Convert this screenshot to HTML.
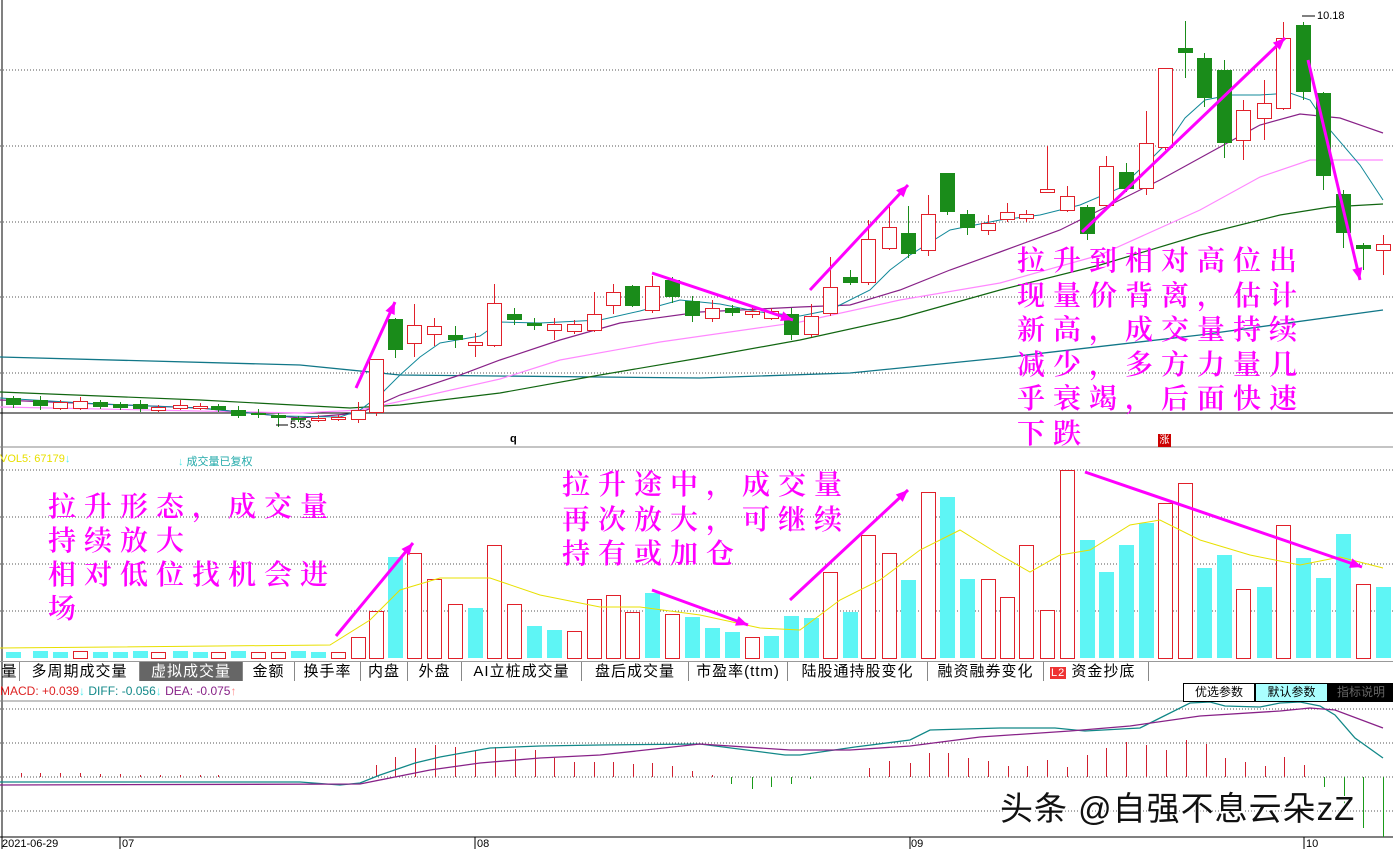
<!DOCTYPE html>
<html><head><meta charset="utf-8"><style>
body{margin:0;width:1393px;height:849px;overflow:hidden;background:#fff;position:relative;font-family:"Liberation Sans","Noto Sans CJK SC",sans-serif}
svg{position:absolute;left:0;top:0}
.ann{position:absolute;color:#f0f;font-family:"Noto Serif CJK SC","Liberation Serif",serif;font-size:28px;font-weight:600;letter-spacing:8px;line-height:34.5px;white-space:nowrap}
.tabs{position:absolute;left:0;top:661px;height:19px;width:1393px;border-top:1px solid #999;font-size:15px}
.tab{position:absolute;top:0;height:19px;line-height:19px;border-right:1px solid #888;text-align:center;color:#000;letter-spacing:1px}
.btn{position:absolute;top:683px;height:17px;line-height:17px;font-size:12px;text-align:center;border:1px solid #000}
.sm{position:absolute;font-size:11px}
</style></head><body>
<svg id="s" width="1393" height="849" shape-rendering="crispEdges"></svg>
<div class="sm" style="left:0;top:453px;color:#e8e000">VOL5: 67179<span style="color:#5ee">↓</span></div>
<div class="sm" style="left:178px;top:453px;color:#2aa"><span style="color:#5ee">↓</span> 成交量已复权</div>
<div class="sm" style="left:1317px;top:10px;color:#000">10.18</div>
<div class="sm" style="left:290px;top:419px;color:#000">5.53</div>
<div class="sm" style="left:510px;top:433px;color:#000;font-weight:bold">q</div>
<div class="sm" style="left:1158px;top:434px;width:13px;height:13px;background:#c00;color:#fff;font-size:10px;text-align:center;line-height:13px">涨</div>
<div class="sm" style="left:0;top:684px;font-size:12px;color:#d22">MACD: +0.039<span style="color:#5ee">↓</span> <span style="color:#188">DIFF: -0.056</span><span style="color:#5ee">↓</span> <span style="color:#828">DEA: -0.075</span><span style="color:#f88">↑</span></div>
<div class="tabs">
<div class="tab" style="left:0;width:19px">量</div>
<div class="tab" style="left:20px;width:119px">多周期成交量</div>
<div class="tab" style="left:140px;width:102px;background:#666;color:#fff">虚拟成交量</div>
<div class="tab" style="left:243px;width:51px">金额</div>
<div class="tab" style="left:295px;width:65px">换手率</div>
<div class="tab" style="left:361px;width:46px">内盘</div>
<div class="tab" style="left:408px;width:53px">外盘</div>
<div class="tab" style="left:462px;width:119px">AI立桩成交量</div>
<div class="tab" style="left:582px;width:106px">盘后成交量</div>
<div class="tab" style="left:689px;width:98px">市盈率(ttm)</div>
<div class="tab" style="left:788px;width:139px">陆股通持股变化</div>
<div class="tab" style="left:928px;width:115px">融资融券变化</div>
<div class="tab" style="left:1044px;width:105px;text-align:left;padding-left:6px;box-sizing:border-box"><span style="background:#e33;color:#fff;font-size:11px;padding:0 1px">L2</span> 资金抄底</div>
</div>
<div class="btn" style="left:1183px;width:70px;background:#fff">优选参数</div>
<div class="btn" style="left:1255px;width:71px;background:#aff">默认参数</div>
<div class="btn" style="left:1327px;width:66px;background:#000;color:#666">指标说明</div>
<div class="sm" style="left:2px;top:838px;font-size:11px">2021-06-29</div>
<div class="sm" style="left:122px;top:838px">07</div>
<div class="sm" style="left:477px;top:838px">08</div>
<div class="sm" style="left:911px;top:838px">09</div>
<div class="sm" style="left:1306px;top:838px">10</div>
<div class="ann" style="left:1017px;top:242px">拉升到相对高位出<br>现量价背离，估计<br>新高，成交量持续<br>减少，多方力量几<br>乎衰竭，后面快速<br>下跌</div>
<div class="ann" style="left:48px;top:488px;line-height:34px">拉升形态，成交量<br>持续放大<br>相对低位找机会进<br>场</div>
<div class="ann" style="left:562px;top:466px">拉升途中，成交量<br>再次放大，可继续<br>持有或加仓</div>
<div style="position:absolute;left:1000px;top:782px;font-size:33px;color:#111;text-shadow:2px 2px 0 #fff,-1px -1px 0 #fff;letter-spacing:1px">头条 @自强不息云朵zZ</div>
<script>
const s=document.getElementById('s');let h='';
const L=(x1,y1,x2,y2,c,w,d)=>h+=`<line x1="${x1}" y1="${y1}" x2="${x2}" y2="${y2}" stroke="${c}" stroke-width="${w||1}" ${d?'stroke-dasharray="1 2"':''}/>`;
const P=(pts,c,w)=>h+=`<polyline fill="none" shape-rendering="auto" stroke="${c}" stroke-width="${w||1}" points="${pts.map(p=>p.join(',')).join(' ')}"/>`;
[70,146,222,297,373,470,517,564,611,709,743,777,811].forEach(y=>L(0,y,1393,y,'#555',1,1));
L(0,413,1393,413,'#000',1);L(2,0,2,837,'#000',1);L(0,447,1393,447,'#888');L(0,701,1393,701,'#888');L(0,837,1393,837,'#000');
[2,120,475,910,1304].forEach(x=>L(x,837,x,849,'#000'));
P([[0,357],[300,365],[400,375],[700,378],[850,373],[1000,358],[1200,335],[1383,310]],'#178',1.3);
P([[0,392],[200,400],[350,408],[400,405],[500,393],[600,375],[700,358],[800,340],[900,318],[1000,290],[1100,265],[1200,235],[1280,215],[1330,207],[1383,204]],'#161',1.2);
P([[0,407],[300,413],[360,410],[420,397],[500,379],[560,360],[660,342],[800,322],[900,300],[1000,283],[1100,255],[1200,210],[1260,177],[1310,160],[1383,160]],'#f8f',1.2);
P([[0,400],[200,408],[300,418],[360,413],[400,395],[460,375],[500,360],[560,340],[620,323],[700,312],[800,307],[850,305],[900,290],[950,270],[1000,252],[1060,230],[1100,210],[1160,180],[1200,158],[1260,125],[1300,114],[1340,118],[1383,133]],'#828',1.2);
P([[0,398],[100,404],[200,408],[280,416],[340,417],[360,410],[380,395],[400,375],[420,357],[440,343],[480,336],[500,322],[540,323],[600,320],[640,311],[680,300],[720,304],[760,312],[800,316],[830,310],[870,290],[890,270],[910,255],[950,230],[1000,220],[1040,215],[1080,205],[1120,188],[1150,160],[1170,140],[1185,118],[1205,100],[1230,95],[1260,95],[1290,93],[1310,100],[1330,130],[1360,165],[1383,200]],'#189',1);
const C=[[13,'g',398,405,396,408],[40,'g',400,406,396,410],[60,'r',402,408,400,410],[80,'r',401,408,397,410],[100,'g',402,407,400,409],[120,'g',404,408,402,410],[140,'g',404,409,400,412],[158,'r',407,410,405,412],[180,'r',405,408,400,410],[200,'r',406,408,403,410],[218,'g',406,410,404,412],[238,'g',410,416,406,418],[258,'g',413,415,409,418],[278,'g',415,418,413,427],[298,'g',418,420,416,422],[318,'r',418,420,415,422],[338,'r',417,419,415,421],[358,'r',410,419,402,423],[376,'r',359,412,359,416],[395,'g',319,350,318,358],[414,'r',325,343,304,357],[434,'r',326,334,318,346],[455,'g',335,340,326,348],[475,'r',342,345,333,357],[494,'r',303,345,284,347],[514,'g',314,320,308,325],[534,'g',323,326,318,330],[554,'r',324,330,318,340],[574,'r',324,331,320,334],[594,'r',314,330,292,332],[613,'r',292,305,284,314],[632,'g',286,306,285,307],[652,'r',286,310,276,313],[672,'g',280,297,277,303],[692,'g',301,316,296,322],[712,'r',308,318,300,322],[732,'g',308,313,305,316],[752,'r',311,314,307,318],[771,'r',311,318,308,320],[791,'g',314,335,308,340],[811,'r',316,334,304,337],[830,'r',287,313,257,316],[850,'g',277,283,270,285],[868,'r',239,282,220,285],[889,'r',227,248,206,250],[908,'g',233,254,206,258],[928,'r',214,250,195,256],[947,'g',173,212,173,215],[967,'g',214,228,210,235],[988,'r',223,230,215,235],[1007,'r',212,219,203,222],[1026,'r',214,218,210,222],[1047,'r',189,192,146,192],[1067,'r',196,210,186,212],[1087,'g',207,234,205,240],[1106,'r',166,205,156,210],[1126,'g',172,189,163,192],[1146,'r',143,188,111,195],[1165,'r',68,147,68,150],[1185,'g',48,53,21,78],[1204,'g',58,98,53,107],[1224,'g',70,143,60,158],[1243,'r',110,140,100,160],[1264,'r',103,118,80,140],[1283,'r',38,108,22,110],[1303,'g',25,92,22,100],[1323,'g',93,176,92,190],[1343,'g',194,233,190,248],[1363,'g',245,249,243,270],[1383,'r',244,250,235,275]];
const V=[652,651,652,651,652,652,651,652,651,652,652,651,652,652,651,652,652,637,611,557,553,579,604,608,545,604,626,630,631,599,595,612,593,614,617,628,632,637,636,616,618,572,612,535,553,580,492,497,579,579,597,545,610,470,540,572,545,523,503,483,568,555,589,587,525,558,578,534,584,587];
const VC='cccrcccrccrcrrccrrrcrrrcrrccrrrrcrcccrcccrcrrcrccrrrrrccccrrccrcrcccr';
C.forEach((c,i)=>{const[x,t,o,b,wt,wb]=c;const col=t=='r'?'#e0202a':'#1a8c1a';
L(x+.5,wt,x+.5,o,col);L(x+.5,b,x+.5,wb,col);
h+=t=='r'?`<rect x="${x-6.5}" y="${o+.5}" width="14" height="${Math.max(b-o,1)}" fill="#fff" stroke="${col}"/>`:`<rect x="${x-7}" y="${o}" width="15" height="${Math.max(b-o,2)}" fill="${col}"/>`;
const vt=V[i],cr=VC[i]=='r';
h+=cr?`<rect x="${x-6.5}" y="${vt+.5}" width="14" height="${658-vt}" fill="#fff" stroke="#e0202a"/>`:`<rect x="${x-7}" y="${vt}" width="15" height="${658-vt}" fill="#5ef5f5"/>`;
});
L(1302,16,1315,16,'#000');L(276,425,288,425,'#000');
P([[0,648],[330,645],[370,620],[400,590],[440,578],[490,578],[540,595],[600,607],[640,607],[700,615],[760,628],[800,630],[840,600],[880,580],[920,550],[960,530],[1000,555],[1030,572],[1060,555],[1090,550],[1130,525],[1160,520],[1200,540],[1250,555],[1300,565],[1340,557],[1383,568]],'#e8e000',1);
const M=[[21,773],[40,773],[60,773],[80,773],[100,774],[120,774],[140,775],[160,775],[180,775],[200,775],[218,775],[376,765],[395,757],[415,748],[435,745],[455,747],[475,751],[495,747],[515,749],[535,750],[554,758],[574,762],[594,762],[613,762],[633,764],[652,763],[672,766],[692,771],[712,775],[869,768],[889,761],[910,763],[929,753],[948,753],[968,758],[988,761],[1008,766],[1027,766],[1047,760],[1067,767],[1087,755],[1106,748],[1126,742],[1146,745],[1166,750],[1186,740],[1206,744],[1225,758],[1245,762],[1265,766],[1284,757],[1304,765]];
M.forEach(([x,y])=>L(x+.5,y,x+.5,777,'#d02030'));
[[731,784],[752,789],[771,787],[791,784],[810,779],[1324,787],[1344,810],[1363,828],[1383,837]].forEach(([x,y])=>L(x+.5,777,x+.5,y,'#1a9a1a'));
P([[0,782],[300,782],[340,785],[360,783],[380,775],[415,763],[440,757],[490,748],[540,746],[600,745],[700,744],[785,755],[800,755],[855,747],[910,740],[930,730],[1000,728],[1055,728],[1085,731],[1140,728],[1160,718],[1190,703],[1210,702],[1225,706],[1260,707],[1280,703],[1300,702],[1320,706],[1335,715],[1355,738],[1383,758]],'#188',1.3);
P([[0,785],[360,784],[390,778],[430,770],[480,763],[540,758],[600,755],[700,744],[790,750],[850,750],[910,746],[980,737],[1070,731],[1130,726],[1200,716],[1280,711],[1310,708],[1335,710],[1383,728]],'#828',1.3);
const A=(x1,y1,x2,y2)=>{h+=`<line shape-rendering="auto" x1="${x1}" y1="${y1}" x2="${x2}" y2="${y2}" stroke="#f0f" stroke-width="3"/>`;const a=Math.atan2(y2-y1,x2-x1),l=13;
h+=`<polygon shape-rendering="auto" fill="#f0f" points="${x2},${y2} ${x2-l*Math.cos(a-0.4)},${y2-l*Math.sin(a-0.4)} ${x2-l*Math.cos(a+0.4)},${y2-l*Math.sin(a+0.4)}"/>`};
A(356,388,395,302);A(652,273,793,320);A(810,290,908,185);A(1082,232,1285,38);A(1308,60,1360,280);
A(336,636,413,543);A(652,590,748,625);A(790,600,908,490);A(1085,472,1362,567);
s.innerHTML=h;
</script>
</body></html>
